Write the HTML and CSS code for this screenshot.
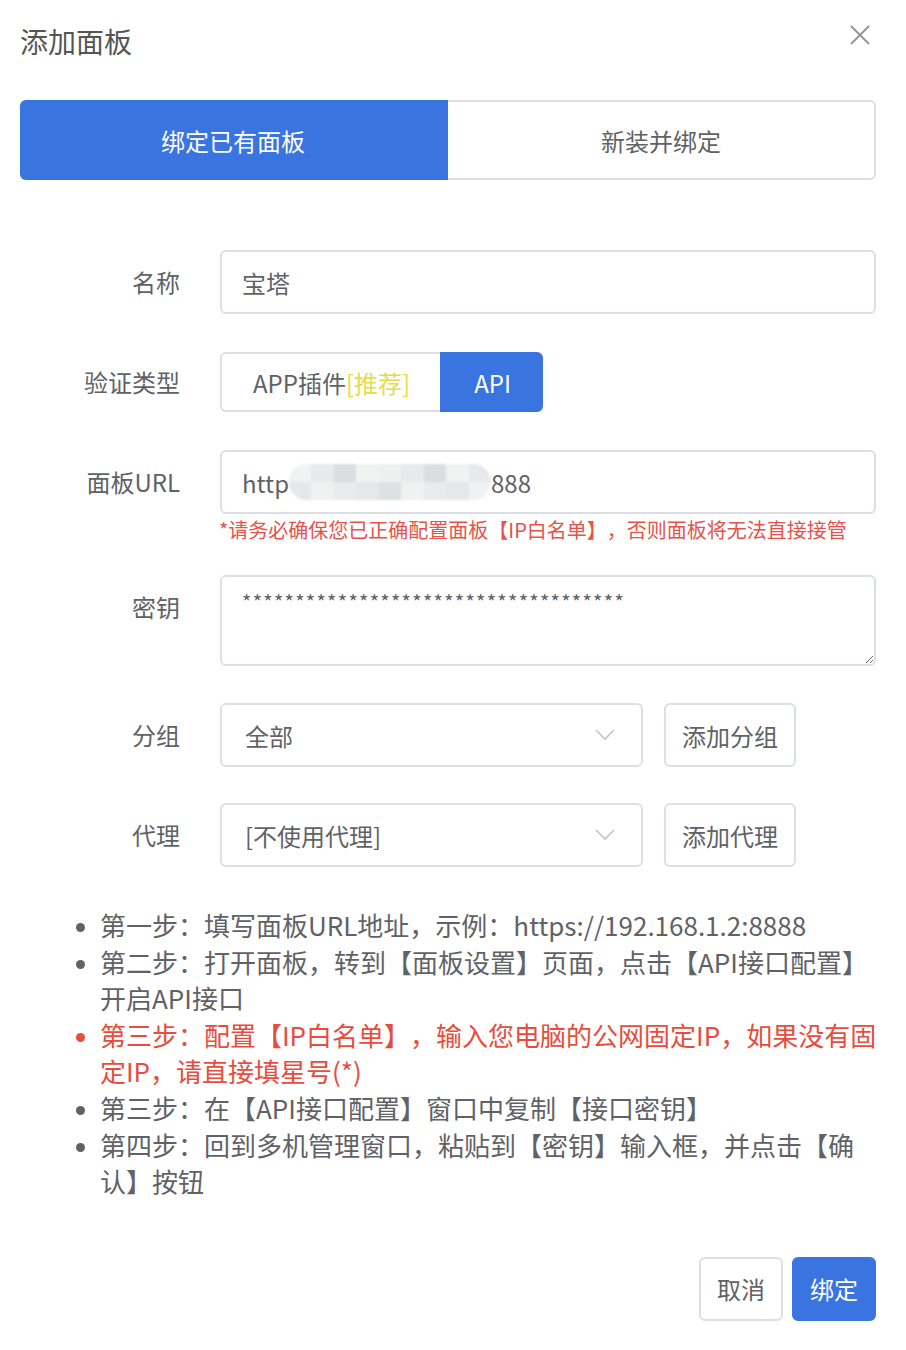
FILE: index.html
```html
<!DOCTYPE html>
<html lang="zh-CN">
<head>
<meta charset="utf-8">
<title>添加面板</title>
<link rel="stylesheet" href="styles.css">
</head>
<body>
<div class="dialog">
  <div class="header">
    <div class="title">添加面板</div>
    <svg class="close" width="22" height="22" viewBox="0 0 22 22"><path d="M2 2L20 20M20 2L2 20" stroke="#909399" stroke-width="1.8" fill="none"/></svg>
  </div>
  <div class="tabs">
    <div class="tab active">绑定已有面板</div>
    <div class="tab">新装并绑定</div>
  </div>
  <div class="form">
    <div class="row r-name">
      <div class="label">名称</div>
      <div class="input">宝塔</div>
    </div>
    <div class="row r-type">
      <div class="label label-60">验证类型</div>
      <div class="radios">
        <div class="radio">APP插件<span class="rec">[推荐]</span></div>
        <div class="radio on">API</div>
      </div>
    </div>
    <div class="row r-url">
      <div class="label">面板URL</div>
      <div class="field">
        <div class="input">http<span class="mosaic"><i class="c1"></i><i class="c2"></i><i class="c3"></i><i class="c1"></i><i class="c4"></i><i class="c2"></i><i class="c3"></i><i class="c1"></i><i class="c2"></i></span>888</div>
        <div class="hint">*请务必确保您已正确配置面板【IP白名单】，否则面板将无法直接接管</div>
      </div>
    </div>
    <div class="row r-key">
      <div class="label">密钥</div>
      <textarea class="textarea" readonly>************************************</textarea>
    </div>
    <div class="row r-group">
      <div class="label">分组</div>
      <div class="select">全部<svg class="arrow" width="20" height="12" viewBox="0 0 20 12"><path d="M1 1L10 10L19 1" stroke="#c0c4cc" stroke-width="1.6" fill="none"/></svg></div>
      <div class="btn">添加分组</div>
    </div>
    <div class="row r-proxy">
      <div class="label">代理</div>
      <div class="select">[不使用代理]<svg class="arrow" width="20" height="12" viewBox="0 0 20 12"><path d="M1 1L10 10L19 1" stroke="#c0c4cc" stroke-width="1.6" fill="none"/></svg></div>
      <div class="btn">添加代理</div>
    </div>
  </div>
  <ul class="steps">
    <li>第一步：填写面板URL地址，示例：https://192.168.1.2:8888</li>
    <li>第二步：打开面板，转到【面板设置】页面，点击【API接口配置】开启API接口</li>
    <li class="warn">第三步：配置【IP白名单】，输入您电脑的公网固定IP，如果没有固定IP，请直接填星号(*)</li>
    <li>第三步：在【API接口配置】窗口中复制【接口密钥】</li>
    <li>第四步：回到多机管理窗口，粘贴到【密钥】输入框，并点击【确认】按钮</li>
  </ul>
  <div class="footer">
    <div class="btn">取消</div>
    <div class="btn primary">绑定</div>
  </div>
</div>
</body>
</html>
```

FILE: styles.css
```css
* { box-sizing: border-box; }
html, body { margin: 0; padding: 0; background: #fff; }
body {
  font-family: "Noto Sans CJK SC", "Noto Sans", sans-serif;
  color: #606266;
  text-spacing-trim: space-all;
}
.dialog { width: 906px; padding: 0 30px 0 20px; }
.header {
  height: 84px;
  display: flex;
  justify-content: space-between;
  align-items: flex-start;
}
.title { font-size: 28px; line-height: 28px; margin-top: 27px; color: #555; }
.close { margin-top: 24px; margin-right: 5px; }
.tabs {
  margin-top: 16px;
  display: flex;
  height: 80px;
}
.tab {
  flex: 1;
  display: flex;
  align-items: center;
  justify-content: center;
  font-size: 24px;
  border: 2px solid #dcdfe6;
  border-left: none;
  border-radius: 0 6px 6px 0;
  color: #606266;
}
.tab.active {
  background: #3a74e0;
  border-color: #3a74e0;
  color: #fff;
  border-radius: 6px 0 0 6px;
}
.form { margin-top: 70px; }
.row { display: flex; align-items: flex-start; }
.label {
  width: 200px;
  flex: none;
  padding-right: 40px;
  text-align: right;
  font-size: 24px;
  line-height: 64px;
  color: #606266;
}
.label-60 { line-height: 60px; }
.input {
  flex: 1;
  height: 64px;
  border: 2px solid #dcdfe6;
  border-radius: 6px;
  padding-left: 20px;
  display: flex;
  align-items: center;
  font-size: 24px;
  color: #606266;
}
.r-name { margin-bottom: 38px; }
.r-type { margin-bottom: 38px; }
.radios { display: flex; height: 60px; }
.radio {
  height: 60px;
  display: flex;
  align-items: center;
  font-size: 24px;
  padding: 0 30px 0 31px;
  border: 2px solid #dcdfe6;
  border-right: none;
  border-radius: 6px 0 0 6px;
  color: #606266;
}
.radio.on {
  background: #3a74e0;
  border-color: #3a74e0;
  color: #fff;
  border-radius: 0 6px 6px 0;
  padding: 0 32px;
}
.rec { color: #e4dc4c; }
.field { flex: 1; }
.field .input { width: 100%; }
.mosaic {
  display: inline-flex;
  height: 36px;
  width: 202px;
  overflow: hidden;
  border-radius: 18px;
  filter: blur(1px);
}
.mosaic i { flex: 1; display: block; }
.mosaic .c1 { background: linear-gradient(#f1f2f2 50%, #e6e7e8 50%); }
.mosaic .c2 { background: linear-gradient(#e8e9ea 50%, #f0f1f1 50%); }
.mosaic .c3 { background: linear-gradient(#dcdddf 50%, #e9eaeb 50%); }
.mosaic .c4 { background: linear-gradient(#eeefef 50%, #dfe0e1 50%); }
.hint {
  font-size: 20px;
  line-height: 32px;
  color: #e5534b;
  margin-left: -1px;
}
.r-url { margin-bottom: 29px; }
.textarea {
  flex: 1;
  height: 91px;
  border: 2px solid #dcdfe6;
  border-radius: 6px;
  padding: 12px 20px 10px;
  font-family: "Noto Sans CJK SC", "Noto Sans", sans-serif;
  font-size: 20px;
  letter-spacing: 1.3px;
  line-height: 26px;
  color: #606266;
  resize: vertical;
  outline: none;
}
.r-key { margin-bottom: 37px; }
.select {
  width: 423px;
  height: 64px;
  border: 2px solid #dcdfe6;
  border-radius: 6px;
  padding: 0 26px 0 23px;
  display: flex;
  align-items: center;
  justify-content: space-between;
  font-size: 24px;
  color: #606266;
}
.btn {
  height: 64px;
  border: 2px solid #dcdfe6;
  border-radius: 6px;
  padding: 0 16px;
  display: flex;
  align-items: center;
  font-size: 24px;
  color: #606266;
  background: #fff;
}
.row .btn { margin-left: 21px; }
.r-group { margin-bottom: 36px; }
.steps {
  margin: 40px -7px 0 0;
  padding-left: 80px;
  font-size: 26px;
  line-height: 36.6px;
  color: #606266;
}
.steps li::marker { color: #606266; font-size: 22px; }
.steps li.warn { color: #e74c3c; }
.steps li.warn::marker { color: #e74c3c; }
.footer {
  margin-top: 57px;
  display: flex;
  justify-content: flex-end;
  gap: 9px;
}
.footer .btn { padding: 0 16px; }
.footer .primary {
  background: #3a74e0;
  border-color: #3a74e0;
  color: #fff;
}
```
